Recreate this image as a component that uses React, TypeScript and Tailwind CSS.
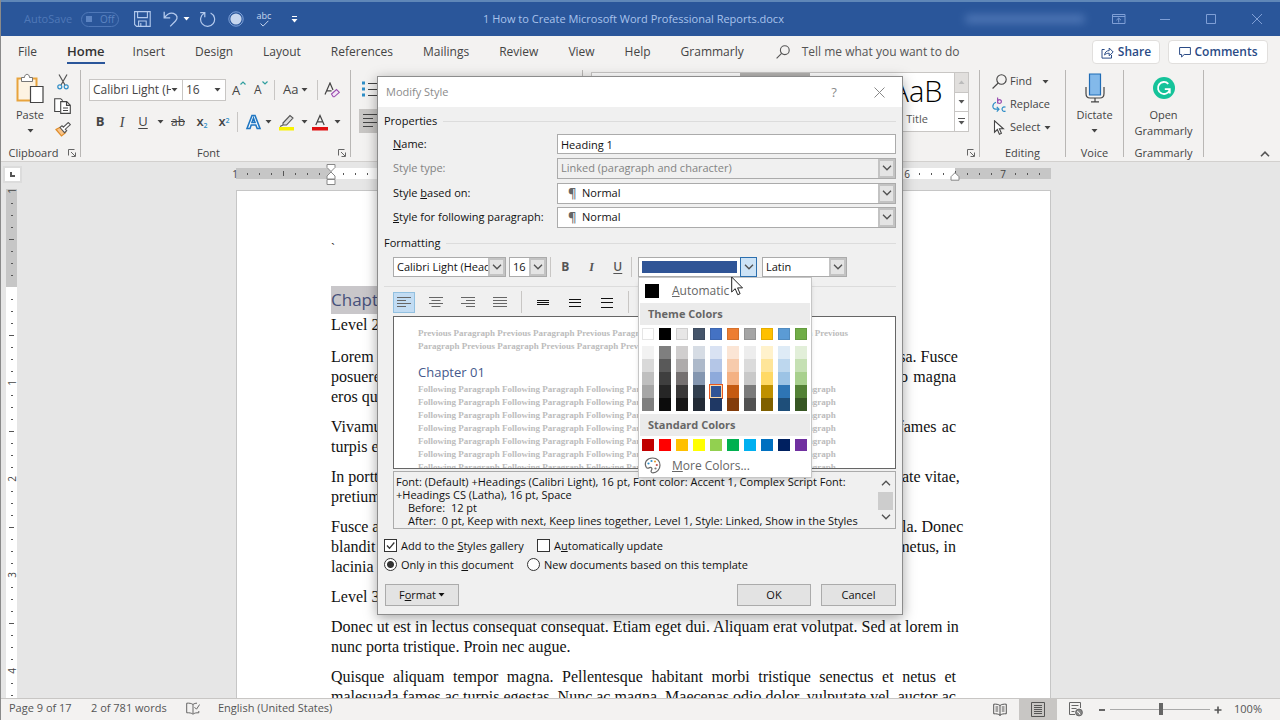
import type { ReactNode } from "react";

const ui = "font-['Open_Sans','Noto_Sans',sans-serif]";

function Caret({ className = "" }: { className?: string }) {
  return (
    <svg viewBox="0 0 7 4" className={`h-1 w-[7px] shrink-0 ${className}`} aria-hidden="true">
      <path d="M0.5 0h6L3.5 3.6z" fill="currentColor" />
    </svg>
  );
}

function Chevron() {
  return (
    <svg viewBox="0 0 10 6" className="h-1.5 w-2.5" fill="none" stroke="#505050" strokeWidth="1.3" aria-hidden="true">
      <path d="M1 0.8l4 4 4-4" />
    </svg>
  );
}

function Launcher({ label }: { label: string }) {
  return (
    <button aria-label={label} className="absolute right-1 top-1">
      <svg viewBox="0 0 8 8" className="size-2" fill="none" stroke="#666" aria-hidden="true">
        <path d="M0.5 6.5v-6h6M3 3l4 4M7.5 3.5v4h-4" />
      </svg>
    </button>
  );
}

function Group({ label, launcher, width, children }: { label: string; launcher?: boolean; width: string; children: ReactNode }) {
  return (
    <section aria-label={label} className={`flex shrink-0 flex-col border-r border-[#b9b7b5] ${width}`}>
      <div className="min-h-0 flex-1">{children}</div>
      <div className="relative h-3 text-center text-[11px] leading-4 text-[#444]">
        <span className={launcher ? "mr-3.5" : ""}>{label}</span>
        {launcher && <Launcher label={`${label} settings`} />}
      </div>
    </section>
  );
}

function WindowButton({ label, children }: { label: string; children: ReactNode }) {
  return (
    <button aria-label={label} className="flex w-[46px] items-center justify-center text-[#7f9fd6]">
      <svg viewBox="0 0 14 12" className="h-3 w-3.5" fill="none" stroke="currentColor" aria-hidden="true">
        {children}
      </svg>
    </button>
  );
}

function TitleBar() {
  return (
    <header className="grid h-9 shrink-0 grid-cols-[1fr_auto_1fr] border-t-2 border-[#5f87b8] bg-[#2a569a] text-[#a9c3ec]">
      <div className="flex items-center pl-[23px] text-[11px]">
        <label htmlFor="autosave" className="w-[57px] text-[#4f78b8]">AutoSave</label>
        <button id="autosave" className="mr-[15px] flex h-[15px] w-[38px] items-center gap-2 rounded-full border border-[#4f78b8] pl-1 text-[10px] text-[#5c84c2]">
          <span className="size-1.5 bg-[#5c84c2]" />
          Off
        </button>
        <button aria-label="Save" className="mr-3">
          <svg viewBox="0 0 17 16" className="h-4 w-[17px]" fill="none" stroke="#b4caed" strokeWidth="1.1" aria-hidden="true">
            <path d="M0.6 0.6h15.6v14.8H2.6l-2-2zM3.6 0.6v6h9.8v-6M4.6 15.4v-5.4h7.6v5.4M6.8 12v3" />
          </svg>
        </button>
        <button aria-label="Undo" className="mr-[9px] flex items-center gap-1 text-white">
          <svg viewBox="0 0 16 16" className="size-4" fill="none" stroke="#b4caed" strokeWidth="1.3" aria-hidden="true">
            <path d="M1.2 0.8v6h6M1.4 6.6C4 3.2 7.5 1.4 10.5 2.4c4 1.4 4.6 5 2 7.6L7.2 15.4" />
          </svg>
          <Caret />
        </button>
        <button aria-label="Repeat" className="mr-3">
          <svg viewBox="0 0 17 16" className="h-4 w-[17px]" fill="none" stroke="#b4caed" strokeWidth="1.2" aria-hidden="true">
            <path d="M5.2 2.2A7 7 0 1 0 11.6 2M1.2 1.6h4.6v4.6" />
          </svg>
        </button>
        <button aria-label="Touch mode" className="mr-3">
          <svg viewBox="0 0 16 16" className="size-4" aria-hidden="true">
            <circle cx="8" cy="8" r="7.2" fill="none" stroke="#7fa2d9" />
            <circle cx="8" cy="8" r="5.6" fill="#c6d6ee" />
          </svg>
        </button>
        <button aria-label="Spelling" className="mr-[19px] flex w-4 flex-col items-center text-[9px] leading-[9px] text-[#c6d6ee]">
          abc
          <svg viewBox="0 0 9 7" className="h-[7px] w-[9px]" fill="none" stroke="currentColor" aria-hidden="true">
            <path d="M0.5 3.5l2.6 2.6L8.4 0.8" />
          </svg>
        </button>
        <button aria-label="Customize toolbar" className="flex flex-col items-center gap-0.5 text-white">
          <span className="h-px w-[5px] bg-white" />
          <Caret />
        </button>
      </div>
      <h1 className="mr-3.5 self-center text-[11px]">1 How to Create Microsoft Word Professional Reports.docx</h1>
      <div className="flex justify-end">
        <div className="mr-[11px] w-[120px] self-center">
          <div className="h-2 rounded-full bg-[#6288c4] opacity-70 blur-[4px]" />
        </div>
        <WindowButton label="Ribbon display options"><path d="M0.5 1.5h12.5v9h-12.5zM0.5 3.5h12.5M6.7 9.5V5.2M4.4 7.2l2.3-2.2L9 7.2" /></WindowButton>
        <WindowButton label="Minimize"><path d="M2 6.5h10" /></WindowButton>
        <WindowButton label="Maximize"><path d="M2.5 1.5h9v9h-9z" /></WindowButton>
        <WindowButton label="Close"><path d="M2 1l10 10M12 1L2 11" /></WindowButton>
      </div>
    </header>
  );
}

const TABS = ["Insert", "Design", "Layout", "References", "Mailings", "Review", "View", "Help", "Grammarly"];

function TabBar() {
  return (
    <nav className="flex h-8 shrink-0 items-center bg-[#f3f2f1] pl-[17px] text-[12px] text-[#444]">
      <div className="flex items-center gap-[30px]">
        <button>File</button>
        <button className="-mr-0.5 flex h-6 flex-col justify-between pt-[3px] text-[13px] font-semibold leading-4 text-[#333] after:h-0.5 after:w-full after:bg-[#2a569a]">Home</button>
        {TABS.map((t) => (
          <button key={t}>{t}</button>
        ))}
      </div>
      <svg viewBox="0 0 14 14" className="ml-8 mr-3 size-3.5" fill="none" stroke="#555" strokeWidth="1.1" aria-hidden="true">
        <circle cx="8.8" cy="5.2" r="4.4" />
        <path d="M5.6 8.4L0.6 13.4" />
      </svg>
      <button className="text-[#555]">Tell me what you want to do</button>
      <div className="ml-auto mr-3 flex gap-2 font-semibold text-[#2a4b86]">
        <button className="flex h-6 w-[68px] items-center justify-center gap-1 rounded-sm border border-[#e1dfdd] bg-white">
          <svg viewBox="0 0 13 13" className="size-[13px]" fill="none" stroke="currentColor" aria-hidden="true">
            <path d="M3.6 3.5H1v8.6h9.5V9M3.6 9c.4-3 2-4.4 4.6-4.4V2l4 4-4 3.8V7.2C6 7.2 4.8 7.8 3.6 9z" />
          </svg>
          Share
        </button>
        <button className="flex h-6 w-[100px] items-center justify-center gap-1 rounded-sm border border-[#e1dfdd] bg-white">
          <svg viewBox="0 0 12 12" className="size-3" fill="none" stroke="currentColor" aria-hidden="true">
            <path d="M0.6 1.5h10.8v7H5.2L2.6 11V8.5H0.6z" />
          </svg>
          Comments
        </button>
      </div>
    </nav>
  );
}

function ClipboardGroup() {
  return (
    <Group label="Clipboard" launcher width="w-20">
      <div className="flex pl-[11px]">
        <button className="flex w-9 flex-col items-center text-[11px] text-[#444]">
          <svg viewBox="0 0 28 32" className="mt-[3px] h-8 w-7" aria-hidden="true">
            <path d="M1.5 5.5h19v22h-19z" fill="#fdf3e2" stroke="#e8a33d" strokeWidth="2" />
            <path d="M5.500 8.500V4.500h3c0-4.200 5-4.200 5 0h3v4z" fill="#fff" stroke="#777" />
            <path d="M14.500 13.500h12.500v16h-12.500z" fill="#fff" stroke="#444" strokeWidth="1.2" />
          </svg>
          <span className="mt-0.5 leading-4">Paste</span>
          <Caret className="mt-1.5" />
        </button>
        <div className="flex flex-col items-center gap-2 pl-1.5 pt-1">
          <button aria-label="Cut">
            <svg viewBox="0 0 12 16" className="h-4 w-3" fill="none" aria-hidden="true">
              <path d="M2 0.5l6 10.500M10 0.500L4 11" stroke="#555" strokeWidth="1.2" />
              <circle cx="2.8" cy="12.8" r="2" stroke="#2f8ec7" strokeWidth="1.2" />
              <circle cx="9.2" cy="12.8" r="2" stroke="#2f8ec7" strokeWidth="1.2" />
            </svg>
          </button>
          <button aria-label="Copy">
            <svg viewBox="0 0 17 16" className="h-4 w-[17px]" fill="#fff" stroke="#444" strokeWidth="1.1" aria-hidden="true">
              <path d="M6 13.5H0.700V0.700h6l2 2M6.700 3.600h6l3.600 3.600v8.200H6.700zM12.500 3.600v3.800h3.800M9 10h5M9 12.500h5" />
            </svg>
          </button>
          <button aria-label="Format painter">
            <svg viewBox="0 0 16 15" className="h-[15px] w-4" aria-hidden="true">
              <path d="M1 7.5l5.500 6.500 4-3.200-5.300-5.600z" fill="#f8c48a" stroke="#e08e2d" strokeWidth="1.2" />
              <path d="M5 5.500l4.500 5.200 2.200-2-1.400-1.500 5-4.600-2-2.100-5 4.600L7 3.700z" fill="#fff" stroke="#555" strokeWidth="1.1" />
            </svg>
          </button>
        </div>
      </div>
    </Group>
  );
}

function VLine({ className = "" }: { className?: string }) {
  return <span className={`w-px shrink-0 bg-[#c8c6c4] ${className}`} />;
}

function FontGroup() {
  return (
    <Group label="Font" launcher width="w-[270px]">
      <div className="pl-2 pt-[9px] text-[#444]">
        <div className="flex h-[22px] items-center">
          <div className="flex h-[22px] w-[94px] items-center border border-[#c8c6c4] bg-white pl-[3px] pr-1">
            <input aria-label="Font name" defaultValue="Calibri Light (Headings)" className="w-[78px] bg-transparent text-[12px] outline-none" />
            <Caret className="ml-auto" />
          </div>
          <div className="flex h-[22px] w-[43px] items-center border border-l-0 border-[#c8c6c4] bg-white pl-[3px] pr-1">
            <input aria-label="Font size" defaultValue="16" className="w-6 bg-transparent text-[12px] outline-none" />
            <Caret className="ml-auto" />
          </div>
          <button aria-label="Grow font" className="ml-1.5 flex w-[22px] items-start text-[13px] leading-5">
            A
            <svg viewBox="0 0 6 4" className="mt-px h-1 w-1.5" fill="none" stroke="#2f9e9e" strokeWidth="1.2" aria-hidden="true"><path d="M0.5 3.5l2.5-2.5 2.5 2.5" /></svg>
          </button>
          <button aria-label="Shrink font" className="flex w-5 items-start text-[12px] leading-5">
            A
            <svg viewBox="0 0 6 4" className="mt-px h-1 w-1.5" fill="none" stroke="#2f9e9e" strokeWidth="1.2" aria-hidden="true"><path d="M0.5 0.5l2.5 2.5 2.5-2.5" /></svg>
          </button>
          <VLine className="h-5" />
          <button aria-label="Change case" className="ml-2 flex w-[26px] items-center gap-[3px] text-[13px]">Aa<Caret /></button>
          <VLine className="ml-2 h-5" />
          <button aria-label="Clear formatting" className="ml-1.5">
            <svg viewBox="0 0 16 16" className="size-4" fill="none" aria-hidden="true">
              <path d="M1 12.5L6 1l3 7M2.6 8.8h5" stroke="#444" strokeWidth="1.2" />
              <path d="M7.5 12l5-4.5 2.8 2.8-5 4.5H9.2z" fill="#f3e6f6" stroke="#9b4fb0" strokeWidth="1.1" />
            </svg>
          </button>
        </div>
        <div className="mt-2.5 flex h-[22px] items-center text-[13px]">
          <button aria-label="Bold" className="w-[22px] font-bold">B</button>
          <button aria-label="Italic" className="w-[22px] font-['Liberation_Serif',serif] text-[14px] italic">I</button>
          <button aria-label="Underline" className="w-5 underline underline-offset-2">U</button>
          <Caret className="ml-1" />
          <button aria-label="Strikethrough" className="ml-1 w-5 text-[12px] line-through">ab</button>
          <button aria-label="Subscript" className="ml-0.5 w-6 font-semibold">x<sub className="text-[7px] text-[#2f8ec7]">2</sub></button>
          <button aria-label="Superscript" className="w-5 font-semibold">x<sup className="text-[7px] text-[#2f8ec7]">2</sup></button>
          <VLine className="ml-[3px] h-5" />
          <button aria-label="Text effects" className="ml-2 flex w-8 items-center gap-1">
            <svg viewBox="0 0 15 16" className="h-4 w-[15px] overflow-visible" aria-hidden="true">
              <path d="M1 14.5L6 1.5h3l5 13h-2.8L9.8 11H5.2L4 14.5zM6 8.5h3L7.5 4.2z" fill="#fff" stroke="#1f76c2" strokeWidth="1.6" />
            </svg>
            <Caret />
          </button>
          <button aria-label="Text highlight color" className="flex w-[34px] items-center gap-1.5">
            <svg viewBox="0 0 17 17" className="size-[17px]" aria-hidden="true">
              <path d="M5 9l7-7.500 3 2.500-6.500 7H5zM5 11l-3 1.500" fill="#ddd" stroke="#555" strokeWidth="1.1" />
              <path d="M1 13h15v3.500H1z" fill="#f8f200" />
            </svg>
            <Caret />
          </button>
          <button aria-label="Font color" className="flex items-center gap-1.5">
            <svg viewBox="0 0 16 17" className="h-[17px] w-4" aria-hidden="true">
              <path d="M3.8 11L8 1.5 12.2 11M5.2 7.8h5.6" fill="none" stroke="#444" strokeWidth="1.2" />
              <path d="M0 13h16v3.5H0z" fill="#e01010" />
            </svg>
            <Caret />
          </button>
        </div>
      </div>
    </Group>
  );
}

function ParagraphGroup() {
  return (
    <Group label="Paragraph" launcher width="w-[232px]">
      <div className="flex flex-col items-start pl-2 pt-[11px]">
        <button aria-label="Bullets" className="ml-[3px]">
          <svg viewBox="0 0 18 16" className="h-4 w-[18px]" aria-hidden="true">
            <path d="M0 0.5h3v3H0zM0 6.5h3v3H0zM0 12.5h3v3H0z" fill="#2f8ec7" />
            <path d="M6 2.5h12M6 8.5h12M6 14.5h12" stroke="#444" />
          </svg>
        </button>
        <button aria-label="Align left" className="mt-3 flex h-6 w-6 items-center justify-center bg-[#c8c6c4]">
          <svg viewBox="0 0 16 14" className="h-3.5 w-4" stroke="#444" aria-hidden="true">
            <path d="M0 0.5h16M0 4.5h10M0 8.5h16M0 12.5h10" />
          </svg>
        </button>
      </div>
    </Group>
  );
}

function StylesGroup() {
  return (
    <Group label="Styles" launcher width="w-0 grow">
      <div className="ml-2 mr-2.5 mt-0.5 flex h-[60px] border border-[#c8c6c4] bg-white">
        <div className="ml-auto mr-[70px] h-1 w-[70px] bg-[#b5b3b1]" />
        <button className="flex w-[74px] flex-col items-center overflow-hidden text-[11px] text-[#555]">
          <span className="h-9 text-[29px] font-light leading-9 text-black">AaB</span>
          <span className="leading-5">Title</span>
        </button>
        <div className="flex w-3.5 flex-col border-l border-[#c8c6c4] text-[#555]">
          <button aria-label="Previous styles" className="flex flex-1 items-center justify-center bg-[#e1dfdd] text-[#bbb]"><Caret className="rotate-180" /></button>
          <button aria-label="Next styles" className="flex flex-1 items-center justify-center border-y border-[#c8c6c4]"><Caret /></button>
          <button aria-label="More styles" className="flex flex-1 flex-col items-center justify-center gap-0.5"><span className="h-px w-[7px] bg-[#555]" /><Caret /></button>
        </div>
      </div>
    </Group>
  );
}

function Ribbon() {
  return (
    <div className="flex h-[94px] shrink-0 border-b border-[#d2d0ce] bg-[#f3f2f1] pb-1 pt-0.5">
      <ClipboardGroup />
      <FontGroup />
      <ParagraphGroup />
      <StylesGroup />
      <Group label="Editing" width="w-[86px]">
        <div className="flex flex-col items-start pl-3 text-[11px] text-[#444]">
          <button className="flex h-[23px] items-center gap-[3px]">
            <svg viewBox="0 0 15 15" className="size-[15px]" fill="none" stroke="#444" strokeWidth="1.1" aria-hidden="true"><circle cx="9.5" cy="5.5" r="4.7" /><path d="M6.2 9L0.6 14.5" /></svg>
            Find<Caret className="ml-[7px]" />
          </button>
          <button className="flex h-[23px] items-center gap-1">
            <svg viewBox="0 0 14 16" className="h-4 w-3.5" fill="none" strokeWidth="1.2" aria-hidden="true">
              <path d="M5.6 0.5v6M5.6 4.6a1.9 1.9 0 1 1 3.8 0a1.9 1.9 0 1 1-3.8 0" stroke="#9b4fb0" />
              <path d="M13.5 10.3a2.2 2.2 0 1 0 0 3.6M4 5.2C0 6.5-0.2 12 3.500 12.200h3.200M4.800 9.800l2.200 2.400-2.200 2.400" stroke="#2f8ec7" />
            </svg>
            Replace
          </button>
          <button className="flex h-[23px] items-center gap-1">
            <svg viewBox="0 0 14 15" className="h-[15px] w-3.5" fill="#fff" stroke="#444" strokeWidth="1.1" aria-hidden="true"><path d="M2.5 0.8v11.400l2.900-2.700 2 4.700 2-0.900-2-4.500h4z" /></svg>
            Select<Caret />
          </button>
        </div>
      </Group>
      <Group label="Voice" width="w-[58px]">
        <button className="flex w-full flex-col items-center text-[11px] text-[#444]">
          <svg viewBox="0 0 20 30" className="mt-[3px] h-[30px] w-5" fill="none" stroke="#444" strokeWidth="1.2" aria-hidden="true">
            <path d="M4.5 1h11v21h-11z" fill="#83b9ea" stroke="#1f6cb5" />
            <path d="M1 14v6.5c0 3 1.5 4.5 4 4.5h10c2.500 0 4-1.500 4-4.500V14M10 25v3.500M6 28.800h8" />
          </svg>
          <span className="mt-1 leading-4">Dictate</span>
          <Caret className="mt-1.5" />
        </button>
      </Group>
      <Group label="Grammarly" width="w-20">
        <button className="flex w-full flex-col items-center text-[11px] leading-4 text-[#444]">
          <svg viewBox="0 0 22 22" className="mb-2 mt-[7px] size-[22px]" aria-hidden="true">
            <circle cx="11" cy="11" r="11" fill="#15c39a" />
            <path d="M15.3 6.8a6 6 0 1 0 1.4 6M11.8 12.2h5v4.2" fill="none" stroke="#fff" strokeWidth="1.8" />
          </svg>
          Open
          <br />
          Grammarly
        </button>
      </Group>
      <div className="flex w-[76px] items-end justify-end">
        <button aria-label="Collapse ribbon" className="mr-2.5">
          <svg viewBox="0 0 10 6" className="h-1.5 w-2.5" fill="none" stroke="#555" strokeWidth="1.6" aria-hidden="true"><path d="M1 5.2l4-4 4 4" /></svg>
        </button>
      </div>
    </div>
  );
}

function rulerMark(i: number) {
  if (i === 8) return null;
  return i % 8 === 0 ? String(Math.abs(i - 8) / 8) : i % 4 === 0 ? "tall" : "dot";
}

function HorizontalRuler() {
  return (
    <div className="relative mt-1.5 h-[11px] bg-[linear-gradient(to_right,#c6c6c6_0_96px,white_96px_719px,#c6c6c6_719px)]">
      <div className="-ml-[7px] flex h-full overflow-hidden text-[10px] leading-[10px] text-[#444]">
        {Array.from({ length: 68 }, (_, i) => {
          const m = rulerMark(i);
          return (
            <span key={i} className="flex w-3 shrink-0 items-center justify-center">
              {m === "tall" ? <span className="h-[5px] w-px bg-[#555]" /> : m === "dot" ? <span className="h-0.5 w-px bg-[#555]" /> : m}
            </span>
          );
        })}
      </div>
      <svg viewBox="0 0 10 22" className="absolute -top-1 left-[90px] h-[22px] w-2.5" fill="#fff" stroke="#888" aria-hidden="true">
        <path d="M1 0.5h8v3L5 7.5 1 3.5zM5 8l4 4v3H1v-3zM1 15.5h8v5H1z" />
      </svg>
      <svg viewBox="0 0 10 9" className="absolute left-[714px] top-1 h-[9px] w-2.5" fill="#fff" stroke="#888" aria-hidden="true">
        <path d="M5 0.7l4 4v3.5H1V4.7z" />
      </svg>
    </div>
  );
}

function VerticalRuler() {
  return (
    <div className="flex w-[21px] shrink-0 flex-col items-center">
      <button aria-label="Tab selector" className="ml-0.5 mt-1.5 flex h-[13px] w-[15px] items-center justify-center bg-white shadow-[0_0_0_2px_#dcdcdc]">
        <span className="size-[5px] border-b-2 border-l-2 border-[#555]" />
      </button>
      <div className="mt-2 min-h-0 w-[11px] flex-1 overflow-hidden bg-[linear-gradient(#c6c6c6_0_98px,white_98px)] text-[10px] leading-3 text-[#444]">
        <div className="-mt-1">
          {Array.from({ length: 44 }, (_, i) => {
            const m = rulerMark(i);
            return (
              <span key={i} className="flex h-3 w-[11px] items-center justify-center">
                {m === "tall" ? <span className="h-px w-[5px] bg-[#555]" /> : m === "dot" ? <span className="h-px w-0.5 bg-[#555]" /> : <span className="-rotate-90">{m}</span>}
              </span>
            );
          })}
        </div>
      </div>
    </div>
  );
}

const PARAGRAPHS: string[][] = [
  [
    "Lorem ipsum dolor sit amet, consectetuer adipiscing elit. Maecenas porttitor congue massa. Fusce",
    "posuere, magna sed pulvinar ultricies, purus lectus malesuada libero, sit amet commodo magna",
    "eros quis urna.",
  ],
  [
    "Vivamus a tellus. Pellentesque habitant morbi tristique senectus et netus et malesuada fames ac",
    "turpis egestas. Proin pharetra nonummy pede. Mauris et orci.",
  ],
  [
    "In porttitor. Donec laoreet nonummy augue. Suspendisse dui purus, scelerisque at, vulputate vitae,",
    "pretium mattis, nunc. Mauris eget neque at sem venenatis eleifend. Ut nonummy.",
  ],
  [
    "Fusce aliquet pede non pede. Suspendisse dapibus lorem pellentesque magna. Integer nulla. Donec",
    "blandit feugiat ligula. Donec hendrerit, felis et imperdiet euismod, purus ipsum pretium metus, in",
    "lacinia nulla nisl eget sapien.",
  ],
  ["Level 3"],
  [
    "Donec ut est in lectus consequat consequat. Etiam eget dui. Aliquam erat volutpat. Sed at lorem in",
    "nunc porta tristique. Proin nec augue.",
  ],
  [
    "Quisque aliquam tempor magna. Pellentesque habitant morbi tristique senectus et netus et",
    "malesuada fames ac turpis egestas. Nunc ac magna. Maecenas odio dolor, vulputate vel, auctor ac,",
    "accumsan id, felis.",
  ],
];

function DocumentArea() {
  return (
    <main className="flex min-h-0 flex-1 overflow-hidden bg-[#e6e6e6] pr-[15px]">
      <VerticalRuler />
      <div className="flex min-w-0 flex-1 justify-center">
        <div className="w-[815px]">
          <HorizontalRuler />
          <article className="mt-[11px] h-full border border-[#c6c6c6] bg-white px-[94px] pt-[47px] font-['Liberation_Serif','Times_New_Roman',serif] text-[16px] leading-5 text-[#111]">
            <p className="mb-7 h-5 text-[12px]">`</p>
            <h2 className="mb-px h-7 w-[150px] bg-[#c9c7ca] font-['Open_Sans',sans-serif] text-[17px] leading-7 text-[#46507a]">Chapter 01</h2>
            <p>Level 2</p>
            <div className="mt-3 flex flex-col gap-2.5">
              {PARAGRAPHS.map((lines) => (
                <p key={lines[0]}>
                  {lines.map((line, i) => (
                    <span key={line} className={`block whitespace-nowrap ${i < lines.length - 1 ? "[text-align-last:justify]" : ""}`}>{line}</span>
                  ))}
                </p>
              ))}
            </div>
          </article>
        </div>
      </div>
    </main>
  );
}

function StatusBar() {
  return (
    <footer className="flex h-[22px] shrink-0 items-center border-t border-[#c8c6c4] bg-[#f3f2f1] pb-0.5 pl-2 pr-[18px] text-[11px] text-[#555]">
      <span className="w-[82px]">Page 9 of 17</span>
      <span className="w-[95px]">2 of 781 words</span>
      <button aria-label="Proofing" className="mr-[18px]">
        <svg viewBox="0 0 14 13" className="h-[13px] w-3.5" fill="none" stroke="#666" aria-hidden="true">
          <path d="M7 11.5V2.5C5.5 1.3 3 1 0.7 1.2v9.6c2.5-.2 4.8.2 6.3 1.4 1.5-1.2 3-1.5 5.8-1.4V9M7 2.5C8.2 1.5 9.5 1.2 11 1.2M8.5 5.2l2 2L13.6 2.5" />
        </svg>
      </button>
      <span>English (United States)</span>
      <div className="-mb-0.5 ml-auto flex items-center self-stretch">
        <button aria-label="Read mode" className="flex w-[38px] justify-center">
          <svg viewBox="0 0 14 14" className="size-3.5" fill="none" stroke="#555" aria-hidden="true">
            <path d="M7 13V2.5C5.5 1.3 3 1 0.7 1.2v9.6c2.5-.2 4.8.2 6.3 1.4 1.5-1.2 3.8-1.6 6.3-1.4V1.2C11 1 8.5 1.3 7 2.5M2.5 4h2.7M2.5 6h2.7M2.5 8h2.7M8.8 4h2.7M8.8 6h2.7M8.8 8h2.7" />
          </svg>
        </button>
        <button aria-label="Print layout" className="flex w-[38px] items-center justify-center self-stretch bg-[#c8c6c4]">
          <svg viewBox="0 0 14 15" className="h-[15px] w-3.5" fill="none" stroke="#555" aria-hidden="true"><path d="M0.5 0.5h13v14H0.5zM3 3.5h8M3 5.5h8M3 7.5h8M3 9.5h8M3 11.5h8" /></svg>
        </button>
        <button aria-label="Web layout" className="flex w-[38px] justify-center">
          <svg viewBox="0 0 14 15" className="h-[15px] w-3.5" fill="none" stroke="#666" aria-hidden="true">
            <path d="M6 12.5H0.5V0.5h11V6M2.5 3.5h7M2.5 6.5h5M2.5 9.5h3" /><circle cx="10" cy="10.5" r="3.4" fill="#888" /><path d="M8 9.5l2 1 1 2" stroke="#fff" />
          </svg>
        </button>
        <button aria-label="Zoom out" className="ml-1 h-0.5 w-1.5 bg-[#666]" />
        <input type="range" aria-label="Zoom" min={0} max={100} defaultValue={51} className="ml-[5px] h-3 w-[100px] appearance-none bg-transparent [&::-webkit-slider-runnable-track]:h-px [&::-webkit-slider-runnable-track]:bg-[#aaa] [&::-webkit-slider-thumb]:-mt-1.5 [&::-webkit-slider-thumb]:h-3 [&::-webkit-slider-thumb]:w-1 [&::-webkit-slider-thumb]:appearance-none [&::-webkit-slider-thumb]:bg-[#666]" />
        <button aria-label="Zoom in" className="ml-1 mr-3">
          <svg viewBox="0 0 8 8" className="size-2" stroke="#555" strokeWidth="1.6" aria-hidden="true"><path d="M0.5 4h7M4 0.5v7" /></svg>
        </button>
        <span>100%</span>
      </div>
    </footer>
  );
}

function SectionTitle({ children }: { children: ReactNode }) {
  return (
    <h3 className="flex h-[18px] items-center gap-1.5 text-[11px] after:h-px after:flex-1 after:bg-[#dcdcdc]">{children}</h3>
  );
}

function Combo({ id, label, value, className, mark, disabled }: { id: string; label?: string; value: string; className: string; mark?: boolean; disabled?: boolean }) {
  return (
    <div className={`flex border border-[#ababab] ${disabled ? "bg-[#f0f0f0] text-[#838383]" : "bg-white"} ${className}`}>
      {mark && <span className="w-[21px] self-center pl-2.5 text-[13px] font-semibold leading-4 text-[#666]">¶</span>}
      <select id={id} aria-label={label} disabled={disabled} className="min-w-0 flex-1 appearance-none overflow-hidden text-clip bg-transparent pl-[3px] text-[11px] opacity-100 outline-none">
        <option>{value}</option>
      </select>
      <span className="flex w-[17px] shrink-0 items-center justify-center border-2 border-[#c3c3c3] bg-[#e4e4e4]">
        <Chevron />
      </span>
    </div>
  );
}

const THEME: string[][] = [
  ["bg-white", "bg-[#f2f2f2]", "bg-[#d9d9d9]", "bg-[#bfbfbf]", "bg-[#a6a6a6]", "bg-[#7f7f7f]"],
  ["bg-black", "bg-[#7f7f7f]", "bg-[#595959]", "bg-[#3f3f3f]", "bg-[#262626]", "bg-[#0c0c0c]"],
  ["bg-[#e7e6e6]", "bg-[#d0cece]", "bg-[#aeabab]", "bg-[#757070]", "bg-[#3a3838]", "bg-[#171616]"],
  ["bg-[#44546a]", "bg-[#d6dce4]", "bg-[#adb9ca]", "bg-[#8496b0]", "bg-[#323f4f]", "bg-[#222a35]"],
  ["bg-[#4472c4]", "bg-[#d9e2f3]", "bg-[#b4c6e7]", "bg-[#8eaadb]", "bg-[#2f5496]", "bg-[#1f3864]"],
  ["bg-[#ed7d31]", "bg-[#fbe5d5]", "bg-[#f7cbac]", "bg-[#f4b183]", "bg-[#c55a11]", "bg-[#833c0b]"],
  ["bg-[#a5a5a5]", "bg-[#ededed]", "bg-[#dbdbdb]", "bg-[#c9c9c9]", "bg-[#7b7b7b]", "bg-[#525252]"],
  ["bg-[#ffc000]", "bg-[#fff2cc]", "bg-[#fee599]", "bg-[#ffd965]", "bg-[#bf9000]", "bg-[#7f6000]"],
  ["bg-[#5b9bd5]", "bg-[#deebf6]", "bg-[#bdd7ee]", "bg-[#9cc3e5]", "bg-[#2e75b5]", "bg-[#1e4e79]"],
  ["bg-[#70ad47]", "bg-[#e2efd9]", "bg-[#c5e0b3]", "bg-[#a8d08d]", "bg-[#538135]", "bg-[#375623]"],
];
const STANDARD = ["bg-[#c00000]", "bg-[#ff0000]", "bg-[#ffc000]", "bg-[#ffff00]", "bg-[#92d050]", "bg-[#00b050]", "bg-[#00b0f0]", "bg-[#0070c0]", "bg-[#002060]", "bg-[#7030a0]"];

function ColorMenu() {
  return (
    <div role="menu" aria-label="Font color" className="absolute left-0 top-full z-10 w-[174px] border border-[#c6c6c6] bg-white px-[3px] text-[12px] text-[#666] shadow-md">
      <button className="flex h-[25px] items-center pl-[3px]"><span className="mr-[13px] size-3.5 bg-black" /><span><u>A</u>utomatic</span></button>
      <h4 className="-mx-0.5 h-[22px] bg-[#ebebeb] pl-2 text-[11px] font-bold leading-[22px]">Theme Colors</h4>
      <div className="flex gap-[5px] py-[3px]">
        {THEME.map((col, c) => (
          <div key={c} className="flex flex-col">
            {col.map((bg, r) => (
              <button
                key={r}
                aria-label={`Theme color ${c + 1}, shade ${r + 1}`}
                className={`w-3 ${r === 0 ? "mb-1.5 h-3 border border-black/10" : "h-[13px]"} ${c === 4 && r === 4 ? "border border-[#fbd9a8] outline outline-[#e8571f]" : ""} ${bg}`}
              />
            ))}
          </div>
        ))}
      </div>
      <h4 className="-mx-0.5 h-[22px] bg-[#ebebeb] pl-2 text-[11px] font-bold leading-[22px]">Standard Colors</h4>
      <div className="flex gap-[5px] py-[3px]">
        {STANDARD.map((bg, i) => (
          <button key={bg} aria-label={`Standard color ${i + 1}`} className={`size-3 ${bg}`} />
        ))}
      </div>
      <button className="flex h-[23px] items-center pl-0.5">
        <svg viewBox="0 0 17 17" className="mr-[11px] size-[17px]" fill="none" stroke="#666" strokeWidth="1.2" aria-hidden="true">
          <path d="M2.400 10.500C-0.500 5.500 3 1 8.500 1c5 0 7.500 3.500 7.500 7.200 0 4.300-3.300 7.600-7 7.600-2 0-2.400-1.500-1.400-3 .9-1.500-.3-3-2-2.200-1.200.6-2.400 1.200-3.200-.1z" />
          <circle cx="4.5" cy="6.5" r="1.1" fill="#2f8ec7" stroke="none" /><circle cx="7.500" cy="4" r="1.1" fill="#2f8ec7" stroke="none" /><circle cx="11" cy="4.500" r="1.1" fill="#e8a33d" stroke="none" /><circle cx="12.800" cy="8" r="1.1" fill="#c0504d" stroke="none" /><circle cx="11.500" cy="11.500" r="1.1" fill="#777" stroke="none" />
        </svg>
        <span><u>M</u>ore Colors...</span>
      </button>
      <svg viewBox="0 0 13 20" className="pointer-events-none absolute -top-0.5 left-[92px] h-5 w-[13px]" fill="#fff" stroke="#222" aria-hidden="true">
        <path d="M0.7 1v15l3.5-3.3 2.5 6 2.4-1-2.500-5.800h4.900z" />
      </svg>
    </div>
  );
}

const ALIGN: [string, string][] = [
  ["Align left", "M0 0.5h14M0 3.5h9M0 6.5h14M0 9.5h9"],
  ["Center", "M0 0.5h14M2.5 3.5h9M0 6.5h14M2.5 9.5h9"],
  ["Align right", "M0 0.5h14M5 3.5h9M0 6.5h14M5 9.5h9"],
  ["Justify", "M0 0.5h14M0 3.5h14M0 6.5h14M0 9.5h14"],
];
const SPACING: [string, string][] = [
  ["Single spacing", "M1 3.5h12M1 5.5h12M1 7.5h12"],
  ["1.5 line spacing", "M1 2.5h12M1 5.5h12M1 9.5h12"],
  ["Double spacing", "M1 1.5h12M1 5.5h12M1 10.5h12"],
];

function LineIcon({ d, dark }: { d: string; dark?: boolean }) {
  return (
    <svg viewBox="0 0 14 11" className="h-[11px] w-3.5" stroke={dark ? "#111" : "#666"} aria-hidden="true">
      <path d={d} />
    </svg>
  );
}

function ModifyStyleDialog() {
  const label = "flex h-6 items-center pl-[9px]";
  return (
    <div role="dialog" aria-label="Modify Style" className="absolute left-1/2 top-[76px] w-[526px] -translate-x-1/2 border border-[#8c8c8c] bg-[#f0f0f0] text-[11px] leading-4 text-[#111] shadow-[0_3px_12px_rgba(0,0,0,0.35)]">
      <div className="flex h-[30px] items-center bg-white pl-2 text-[#8b8b8b]">
        <h2 className="flex-1 text-[11px]">Modify Style</h2>
        <button aria-label="Help" className="w-11 text-[13px]">?</button>
        <button aria-label="Close" className="flex w-[46px] justify-center">
          <svg viewBox="0 0 11 11" className="size-[11px]" stroke="#888" aria-hidden="true"><path d="M0.5 0.5l10 10M10.5 0.5l-10 10" /></svg>
        </button>
      </div>
      <div className="px-1.5 pb-2 pt-[5px]">
        <SectionTitle>Properties</SectionTitle>
        <div className="mt-0.5 grid grid-cols-[173px_1fr] items-center">
          <label htmlFor="name" className={label}><span><u>N</u>ame:</span></label>
          <input id="name" defaultValue="Heading 1" className="h-5 border border-[#ababab] bg-white pl-[3px] outline-none" />
          <label htmlFor="type" className={`${label} text-[#838383]`}>Style type:</label>
          <Combo id="type" value="Linked (paragraph and character)" disabled className="h-[21px]" />
        </div>
        <div className="mt-px grid grid-cols-[173px_1fr] items-center">
          <label htmlFor="based" className={label}><span>Style <u>b</u>ased on:</span></label>
          <Combo id="based" value="Normal" mark className="h-[21px]" />
          <label htmlFor="following" className={label}><span><u>S</u>tyle for following paragraph:</span></label>
          <Combo id="following" value="Normal" mark className="h-[21px]" />
        </div>
        <div className="mt-[5px]"><SectionTitle>Formatting</SectionTitle></div>
        <div className="mt-[5px] flex h-5 items-center pl-[9px]">
          <Combo id="font" label="Font" value="Calibri Light (Headings)" className="h-5 w-[113px]" />
          <Combo id="size" label="Size" value="16" className="ml-[3px] h-5 w-[38px]" />
          <VLine className="ml-[3px] h-5" />
          <div className="flex w-20 justify-around pl-px text-[12px] text-[#555]">
            <button aria-label="Bold" className="w-[26px] font-bold">B</button>
            <button aria-label="Italic" className="w-[26px] font-['Liberation_Serif',serif] font-semibold italic">I</button>
            <button aria-label="Underline" className="w-[26px] font-semibold underline underline-offset-2">U</button>
          </div>
          <VLine className="h-5" />
          <div className="relative ml-1.5">
            <button aria-label="Font color" aria-expanded="true" className="flex h-5 w-[119px] border border-[#ababab] bg-white">
              <span className="m-[3px] flex-1 self-stretch bg-[#2f5496]" />
              <span className="-my-px -mr-px flex h-5 w-[17px] items-center justify-center border border-[#2c6fae] bg-[#cde3f6]"><Chevron /></span>
            </button>
            <ColorMenu />
          </div>
          <Combo id="script" label="Script" value="Latin" className="ml-[5px] h-5 w-[85px]" />
        </div>
        <div className="mt-[9px] flex items-center border-t border-[#dcdcdc] pl-[9px] pt-1">
          <div className="flex gap-2.5">
            {ALIGN.map(([name, d], i) => (
              <button key={name} aria-label={name} className={`flex h-[21px] w-[22px] items-center justify-center border ${i === 0 ? "border-[#92c0e0] bg-[#c2dcf3]" : "border-transparent"}`}><LineIcon d={d} /></button>
            ))}
          </div>
          <VLine className="ml-2.5 mr-2.5 h-[22px]" />
          <div className="flex gap-2.5">
            {SPACING.map(([name, d]) => (
              <button key={name} aria-label={name} className="flex h-[21px] w-[22px] items-center justify-center"><LineIcon d={d} dark /></button>
            ))}
          </div>
          <VLine className="ml-2.5 h-[22px]" />
        </div>
        <div className="ml-[9px] mt-[3px] h-[153px] overflow-hidden border border-[#666] bg-white pl-6 pr-10 pt-2.5 font-['Liberation_Serif',serif] text-[9px] leading-[13px] text-[#bcbcbc]">
          <p className="font-bold">{"Previous Paragraph ".repeat(10)}</p>
          <p className="mb-px mt-[9px] font-['Open_Sans',sans-serif] text-[13px] leading-5 text-[#46598c]">Chapter 01</p>
          <p className="font-bold">{"Following Paragraph ".repeat(35)}</p>
        </div>
        <div className="ml-[9px] mt-0.5 flex h-[58px] border border-[#ababab]">
          <div className="flex-1 overflow-hidden whitespace-pre pl-0.5 pt-[3px] leading-[13px]">
            <p>Font: (Default) +Headings (Calibri Light), 16 pt, Font color: Accent 1, Complex Script Font:</p>
            <p>+Headings CS (Latha), 16 pt, Space</p>
            <p className="pl-3">Before:  12 pt</p>
            <p className="pl-3">After:  0 pt, Keep with next, Keep lines together, Level 1, Style: Linked, Show in the Styles</p>
          </div>
          <div className="flex w-[19px] shrink-0 flex-col items-center py-2">
            <span className="rotate-180"><Chevron /></span>
            <span className="mt-1.5 h-[18px] w-[15px] bg-[#cdcdcd]" />
            <span className="mt-auto"><Chevron /></span>
          </div>
        </div>
        <div className="mt-[7px] flex h-[19px] items-center">
          <input id="gallery" type="checkbox" defaultChecked className="size-[13px] appearance-none border border-[#333] bg-white" />
          <svg viewBox="0 0 13 13" className="pointer-events-none -ml-[13px] size-[13px]" fill="none" stroke="#333" strokeWidth="1.3" aria-hidden="true"><path d="M3 6.5l2.5 2.8L10.3 3.5" /></svg>
          <label htmlFor="gallery" className="ml-1 w-[136px]">Add to the <u>S</u>tyles gallery</label>
          <input id="auto" type="checkbox" className="size-[13px] appearance-none border border-[#333] bg-white" />
          <label htmlFor="auto" className="ml-1">A<u>u</u>tomatically update</label>
        </div>
        <div className="flex h-[19px] items-center">
          <input id="only" name="scope" type="radio" defaultChecked className="size-[13px] appearance-none rounded-full border border-[#333] bg-white checked:bg-[radial-gradient(#333_0_3px,white_4px)]" />
          <label htmlFor="only" className="ml-1 w-[126px]">Only in this <u>d</u>ocument</label>
          <input id="new" name="scope" type="radio" className="size-[13px] appearance-none rounded-full border border-[#333] bg-white" />
          <label htmlFor="new" className="ml-1">New documents based on this template</label>
        </div>
        <div className="mt-2.5 flex h-[22px] gap-2.5">
          <button className="ml-px mr-auto flex w-[74px] items-center justify-center gap-0.5 border border-[#ababab] bg-[#e3e3e3]"><span>F<u>o</u>rmat</span><Caret /></button>
          <button className="w-[74px] border border-[#ababab] bg-[#e3e3e3]">OK</button>
          <button className="w-[75px] border border-[#ababab] bg-[#e3e3e3]">Cancel</button>
        </div>
      </div>
    </div>
  );
}

export default function App() {
  return (
    <div className={`relative flex h-screen flex-col overflow-hidden bg-[#8a8a8a] pl-px ${ui}`}>
      <TitleBar />
      <TabBar />
      <Ribbon />
      <DocumentArea />
      <StatusBar />
      <ModifyStyleDialog />
    </div>
  );
}
